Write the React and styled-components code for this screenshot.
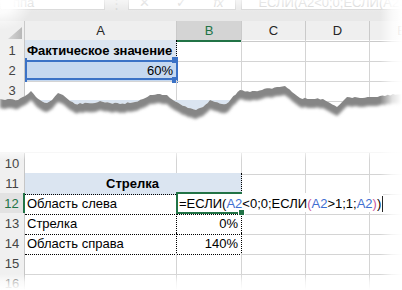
import React from 'react';
import styled, { createGlobalStyle } from 'styled-components';

const Global = createGlobalStyle`
  html, body { margin: 0; padding: 0; background: #fff; }
  body { font-family: "Liberation Sans", Arial, sans-serif; }
`;

const COLS = '25px 152px 65px 64px 64px 64px';
const GREEN = '#217346';
const BLUE = '#3b72c6';

const Page = styled.div`
  position: relative;
  width: 402px;
  height: 290px;
  overflow: hidden;
  background: #fff;
  font-family: "Liberation Sans", Arial, sans-serif;
  font-size: 13px;
  color: #000;
`;

const TopSheet = styled.div`
  height: 120px;
  overflow: hidden;
`;

const FormulaStrip = styled.div`
  height: 21px;
  background: #e8e8e8;
  display: flex;
  align-items: flex-start;
`;

const StripBox = styled.div`
  height: 10px;
  width: ${p => (p.$w ? `${p.$w}px` : 'auto')};
  flex: ${p => (p.$w ? '0 0 auto' : '1 1 auto')};
  margin-left: ${p => p.$ml || 0}px;
  background: #fff;
  border: 1px solid #d6d6d6;
  border-top: 0;
  box-sizing: border-box;
  overflow: hidden;
  display: flex;
  align-items: flex-end;
  padding-left: ${p => p.$pad || 4}px;
  gap: ${p => p.$gap || 0}px;
`;

const Faint = styled.span`
  font-size: 13px;
  line-height: 13px;
  color: #d2d2d2;
  white-space: nowrap;
`;

const StripGap = styled.div`
  width: 32px;
  height: 10px;
  display: flex;
  justify-content: center;
  align-items: flex-end;
  overflow: hidden;
`;

const HeaderRow = styled.div`
  display: grid;
  grid-template-columns: ${COLS};
  height: 19px;
  background: #efefef;
`;

const HeaderCell = styled.div`
  box-sizing: border-box;
  border-right: 1px solid #cacaca;
  border-bottom: ${p => (p.$active ? `2px solid ${GREEN}` : '1px solid #cacaca')};
  background: ${p => (p.$active ? '#d4d4d4' : 'transparent')};
  color: ${p => (p.$active ? GREEN : '#262626')};
  text-align: center;
  line-height: 19px;
  white-space: nowrap;
`;

const Corner = styled.div`
  box-sizing: border-box;
  border-right: 1px solid #cacaca;
  border-bottom: 1px solid #cacaca;
  display: flex;
  align-items: flex-end;
  justify-content: flex-end;
  padding: 0 2px 2px 0;
`;

const Row = styled.div`
  display: grid;
  grid-template-columns: ${COLS};
  height: 20px;
`;

const RowHead = styled.div`
  box-sizing: border-box;
  background: ${p => (p.$active ? '#e2e2e2' : '#f0f0f0')};
  border-right: ${p => (p.$active ? `2px solid ${GREEN}` : '1px solid #c6c6c6')};
  border-bottom: 1px solid #d9d9d9;
  color: ${p => (p.$active ? GREEN : '#444')};
  text-align: center;
  line-height: 20px;
  padding-top: 1px;
  white-space: nowrap;
`;

const Cell = styled.div`
  position: relative;
  box-sizing: border-box;
  grid-column: span ${p => p.$span || 1};
  border-right: 1px ${p => (p.$dr ? 'dotted #000' : 'solid #d4d4d4')};
  border-bottom: 1px ${p => (p.$db ? 'dotted #000' : 'solid #d4d4d4')};
  background: ${p => p.$fill || 'transparent'};
  text-align: ${p => p.$align || 'left'};
  font-weight: ${p => (p.$bold ? 700 : 400)};
  padding: 1px 3px 0 2px;
  line-height: 20px;
  white-space: nowrap;
`;

const SelBox = styled.div`
  position: absolute;
  left: 0;
  top: 0;
  width: 153px;
  height: 20px;
  box-sizing: border-box;
  border: 2px solid ${BLUE};
  pointer-events: none;
`;

const Handle = styled.div`
  position: absolute;
  left: ${p => p.$x}px;
  top: ${p => p.$y}px;
  width: ${p => p.$w}px;
  height: ${p => p.$h}px;
  background: ${BLUE};
`;

const BottomSheet = styled.div`
  margin-top: 32px;
  border-top: 1px solid #ececec;
`;

const Editor = styled.div`
  position: absolute;
  left: 0;
  top: 0;
  width: 206px;
  height: 19px;
  background: #fff;
  z-index: 2;
  padding: 1px 0 0 2px;
  box-sizing: border-box;
  line-height: 20px;
  white-space: nowrap;
  display: flex;
  align-items: flex-start;
`;

const Caret = styled.span`
  display: inline-block;
  width: 1px;
  height: 16px;
  margin: 2px 0 0 1px;
  background: #000;
`;

const Ref = styled.span`
  color: #3f6fd1;
`;

const Paren = styled.span`
  color: #cc5aa0;
`;

const ActiveFrame = styled.div`
  position: absolute;
  left: -1px;
  top: -1px;
  width: 66px;
  height: 22px;
  box-sizing: border-box;
  border: 2px solid ${GREEN};
  border-right: 0;
  z-index: 3;
  pointer-events: none;
`;

const FillHandle = styled.div`
  position: absolute;
  left: 61px;
  top: 16px;
  width: 5px;
  height: 5px;
  background: ${GREEN};
  border: 1px solid #fff;
  z-index: 4;
`;

const TearLayer = styled.svg`
  position: absolute;
  left: 0;
  top: 80px;
  pointer-events: none;
`;

const FadeRight = styled.div`
  position: absolute;
  right: 0;
  top: 0;
  width: 22px;
  height: 290px;
  background: linear-gradient(to right, rgba(255,255,255,0) 0%, rgba(255,255,255,0.75) 55%, #fff 100%);
  pointer-events: none;
  z-index: 10;
`;

const FadeBottom = styled.div`
  position: absolute;
  left: 0;
  bottom: 0;
  width: 402px;
  height: 16px;
  background: linear-gradient(to bottom, rgba(255,255,255,0) 0%, rgba(255,255,255,0.7) 50%, #fff 100%);
  pointer-events: none;
  z-index: 10;
`;

const FadeSheetTop = styled.div`
  position: absolute;
  left: 0;
  top: 140px;
  width: 402px;
  height: 20px;
  background: linear-gradient(to bottom, #fff 0%, rgba(255,255,255,0.92) 40%, rgba(255,255,255,0.55) 65%, rgba(255,255,255,0) 100%);
  pointer-events: none;
  z-index: 10;
`;

const FadeCorner = styled.div`
  position: absolute;
  left: 0;
  top: 0;
  width: 60px;
  height: 50px;
  background: radial-gradient(ellipse 34px 30px at 0 0, #fff 0%, rgba(255,255,255,0.85) 45%, rgba(255,255,255,0) 100%);
  pointer-events: none;
  z-index: 10;
`;

const FadeTop = styled.div`
  position: absolute;
  left: 0;
  top: 0;
  width: 402px;
  height: 12px;
  background: linear-gradient(to bottom, rgba(255,255,255,0.6) 0%, rgba(255,255,255,0) 100%);
  pointer-events: none;
  z-index: 10;
`;

/* torn edge geometry (drawing) */
const KEY = [
  [0, 19], [18, 20], [25, 16], [31, 11], [36, 17], [40, 20], [47, 23], [52, 20], [58, 13],
  [63, 15], [70, 21], [75, 24], [95, 23], [100, 21], [110, 23], [120, 24], [135, 22],
  [143, 19], [150, 15], [160, 14], [167, 15], [173, 20], [180, 24], [188, 28], [196, 30],
  [203, 27], [210, 20], [215, 22], [222, 24], [226, 24], [231, 19], [240, 10], [250, 12],
  [262, 10], [277, 7], [285, 6], [292, 12], [300, 18], [315, 19], [323, 19], [330, 23],
  [337, 27], [343, 21], [347, 17], [360, 18], [375, 17], [385, 16], [393, 14], [402, 14],
];

function buildJag(points) {
  const out = [];
  let seed = 11;
  const rnd = () => {
    seed = (seed * 9301 + 49297) % 233280;
    return seed / 233280;
  };
  for (let i = 0; i < points.length - 1; i++) {
    const [x1, y1] = points[i];
    const [x2, y2] = points[i + 1];
    const n = Math.max(1, Math.round((x2 - x1) / 2.5));
    for (let k = 0; k < n; k++) {
      const t = k / n;
      const x = x1 + (x2 - x1) * t;
      const y = y1 + (y2 - y1) * t + (k === 0 ? 0 : (rnd() - 0.5) * 1.6);
      out.push([x, y]);
    }
  }
  out.push(points[points.length - 1]);
  return out;
}

const JAG = buildJag(KEY);
const toD = pts => pts.map(([x, y], i) => `${i ? 'L' : 'M'}${x.toFixed(1)} ${y.toFixed(1)}`).join(' ');
const WHITE_D = `${toD(JAG)} L402 60 L0 60 Z`;
const BAND_D = `${toD(JAG.map(([x, y]) => [x, y - 4]))} ${JAG.slice().reverse().map(([x, y]) => `L${x.toFixed(1)} ${(y + 9).toFixed(1)}`).join(' ')} Z`;

function Tear() {
  return (
    <TearLayer width="402" height="60" viewBox="0 0 402 60">
      <defs>
        <clipPath id="belowTear">
          <path d={WHITE_D} />
        </clipPath>
        <filter id="tearBlur" x="-5%" y="-100%" width="110%" height="300%">
          <feGaussianBlur stdDeviation="1.6" />
        </filter>
      </defs>
      <path d={WHITE_D} fill="#fff" />
      <g clipPath="url(#belowTear)">
        <path d={BAND_D} fill="#868686" filter="url(#tearBlur)" />
      </g>
    </TearLayer>
  );
}

const Blank = ({ n = 4 }) =>
  Array.from({ length: n }, (_, i) => <Cell key={`b${i}`} />);

export default function App() {
  return (
    <>
      <Global />
      <Page>
        <TopSheet>
          <FormulaStrip>
            <StripBox $w={105} $pad={12}>
              <Faint>ппа</Faint>
            </StripBox>
            <StripGap>
              <Faint>⋮</Faint>
            </StripGap>
            <StripBox $w={108} $pad={10} $gap={26}>
              <Faint>✕</Faint>
              <Faint>✓</Faint>
              <Faint><i>fx</i></Faint>
            </StripBox>
            <StripBox $ml={5} $pad={16}>
              <Faint>ЕСЛИ(A2&lt;0;0;ЕСЛИ(A2&gt;1;1;A2))</Faint>
            </StripBox>
          </FormulaStrip>
          <HeaderRow>
            <Corner>
              <svg width="14" height="12" viewBox="0 0 14 12">
                <defs>
                  <linearGradient id="cornerG" x1="0" y1="0" x2="1" y2="0">
                    <stop offset="0" stopColor="#d6d6d6" />
                    <stop offset="1" stopColor="#b8b8b8" />
                  </linearGradient>
                </defs>
                <polygon points="0,12 14,12 14,0" fill="url(#cornerG)" />
              </svg>
            </Corner>
            <HeaderCell>A</HeaderCell>
            <HeaderCell $active>B</HeaderCell>
            <HeaderCell>C</HeaderCell>
            <HeaderCell>D</HeaderCell>
            <HeaderCell>E</HeaderCell>
          </HeaderRow>
          <Row>
            <RowHead>1</RowHead>
            <Cell $fill="#dbe5f1" $bold $dr>Фактическое значение</Cell>
            <Blank />
          </Row>
          <Row>
            <RowHead>2</RowHead>
            <Cell $fill="#c5d8f0" $align="right">
              60%
              <SelBox>
                <Handle $x={-2} $y={-4} $w={2} $h={4} />
                <Handle $x={-2} $y={16} $w={2} $h={4} />
                <Handle $x={145} $y={-5} $w={6} $h={6} />
                <Handle $x={145} $y={15} $w={6} $h={6} />
              </SelBox>
            </Cell>
            <Blank />
          </Row>
          <Row>
            <RowHead>3</RowHead>
            <Cell $db />
            <Cell $db />
            <Blank n={3} />
          </Row>
          <Row>
            <RowHead />
            <Cell $span={2} $fill="#dbe5f1" $dr />
            <Blank n={3} />
          </Row>
        </TopSheet>

        <BottomSheet>
          <Row>
            <RowHead>10</RowHead>
            <Cell $db />
            <Cell $db />
            <Blank n={3} />
          </Row>
          <Row>
            <RowHead>11</RowHead>
            <Cell $span={2} $fill="#dbe5f1" $bold $align="center" $db $dr>Стрелка</Cell>
            <Blank n={3} />
          </Row>
          <Row>
            <RowHead $active>12</RowHead>
            <Cell $db $dr>Область слева</Cell>
            <Cell $db $dr>
              <Editor>
                =ЕСЛИ(<Ref>A2</Ref>&lt;0;0;ЕСЛИ<Paren>(</Paren><Ref>A2</Ref>&gt;1;1;<Ref>A2</Ref><Paren>)</Paren>)
                <Caret />
              </Editor>
              <ActiveFrame />
              <FillHandle />
            </Cell>
            <Blank n={3} />
          </Row>
          <Row>
            <RowHead>13</RowHead>
            <Cell $db $dr>Стрелка</Cell>
            <Cell $db $dr $align="right">0%</Cell>
            <Blank n={3} />
          </Row>
          <Row>
            <RowHead>14</RowHead>
            <Cell $db $dr>Область справа</Cell>
            <Cell $db $dr $align="right">140%</Cell>
            <Blank n={3} />
          </Row>
          <Row>
            <RowHead>15</RowHead>
            <Blank n={5} />
          </Row>
          <Row>
            <RowHead>16</RowHead>
            <Blank n={5} />
          </Row>
        </BottomSheet>

        <Tear />
        <FadeSheetTop />
        <FadeCorner />
        <FadeTop />
        <FadeRight />
        <FadeBottom />
      </Page>
    </>
  );
}
